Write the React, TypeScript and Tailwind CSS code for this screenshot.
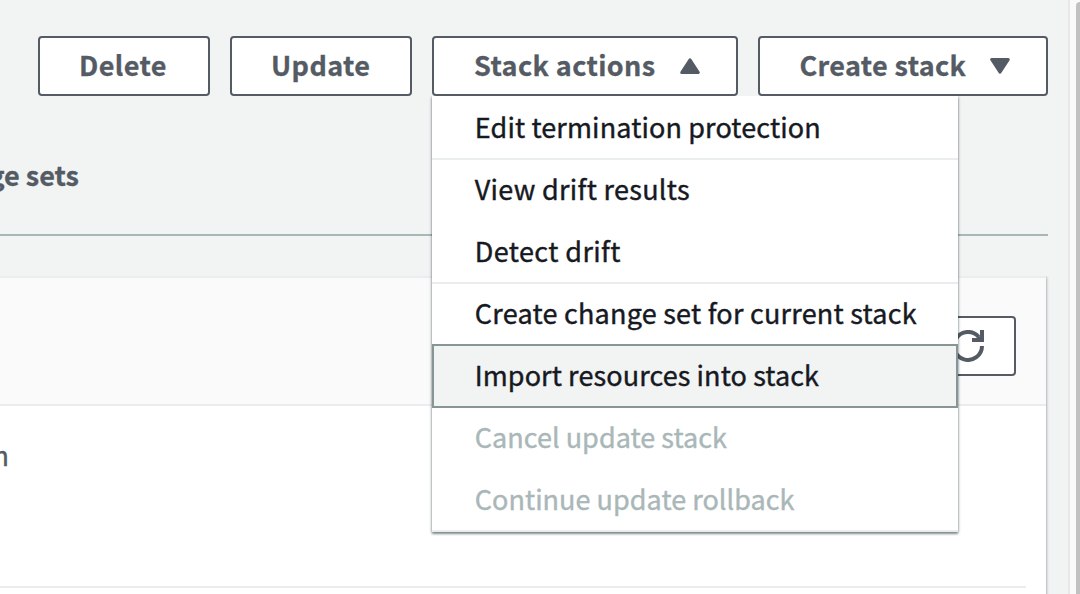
import type { ReactNode } from "react";

const items = [
  { label: "Edit termination protection", cls: "tracking-[0.12px] border-t-transparent" },
  { label: "View drift results", cls: "tracking-[0.3px] border-t-[#eaeded]" },
  { label: "Detect drift", cls: "tracking-[0.4px] border-t-transparent" },
  { label: "Create change set for current stack", cls: "tracking-[0.23px] border-t-[#eaeded]" },
  { label: "Import resources into stack", cls: "selected" },
  { label: "Cancel update stack", cls: "tracking-[0.03px] border-t-transparent text-[#aab7b8]" },
  { label: "Continue update rollback", cls: "tracking-[0.03px] border-t-transparent text-[#aab7b8]" },
];

function Button({ className, children }: { className: string; children: ReactNode }) {
  return (
    <button
      className={`flex h-[60px] shrink-0 rounded-[4px] border-2 border-[#545b64] bg-white text-left text-[27px] leading-[54px] font-bold whitespace-nowrap text-[#545b64] [-webkit-text-stroke:0.3px] ${className}`}
    >
      {children}
    </button>
  );
}

function Caret({ up = false }: { up?: boolean }) {
  return (
    <svg className="mt-[18px] ml-6 h-5 w-5" viewBox="0 0 20 20" fill="#545b64" stroke="#545b64" strokeWidth="3" strokeLinejoin="round">
      {up ? <path d="M10 3.8 18.3 16.5H1.7Z" /> : <path d="M1.7 3.5H18.3L10 16.2Z" />}
    </svg>
  );
}

export default function App() {
  return (
    <div className="flex h-[594px] w-[1080px] overflow-hidden bg-[#f2f3f3] font-['Noto_Sans_CJK_SC',sans-serif] text-[#16191f]">
      <main className="flex w-[1068px] shrink-0 flex-col">
        <header className="flex h-24 shrink-0 items-end gap-5 pl-[38px]">
          <Button className="w-[172px] pl-[39px] tracking-[0.4px]">Delete</Button>
          <Button className="w-[182px] pl-[39px] tracking-[0.4px]">Update</Button>
          <div className="relative">
            <Button className="w-[306px] pl-[40px] tracking-[0.4px]">
              Stack actions
              <Caret up />
            </Button>
            <ul className="absolute top-[60px] left-0 z-10 w-[526px] border-b-2 border-[#eaeded] bg-white text-[27px] leading-[58px] whitespace-nowrap shadow-[0_1px_3px_0_rgba(0,28,36,0.45),0_2px_2px_0_rgba(0,28,36,0.3)] [-webkit-text-stroke:0.4px] [clip-path:inset(0_-6px_-8px_-6px)]">
              {items.map((it) => (
                <li
                  key={it.label}
                  className={
                    it.cls === "selected"
                      ? "relative -mb-[2px] h-16 border-2 border-[#879596] bg-[#f2f3f3] pl-[40.7px] tracking-[0.1px]"
                      : `h-[62px] border-t-2 pl-[42.8px] ${it.cls}`
                  }
                >
                  {it.label}
                </li>
              ))}
            </ul>
          </div>
          <Button className="w-[290px] pl-[39.5px] tracking-[0.35px]">
            Create stack
            <Caret />
          </Button>
        </header>
        <nav className="mr-5 flex h-[140px] shrink-0 border-b-2 border-[#aab7b8]">
          <div className="mt-[57px] flex w-[79px] justify-end text-[27px] leading-[44px] font-bold whitespace-nowrap text-[#545b64] [-webkit-text-stroke:0.3px]">Change sets</div>
        </nav>
        <section className="mt-10 mr-[22px] h-[340px] shrink-0 border-t-2 border-[#eaeded] bg-white shadow-[0_1px_3px_0_rgba(0,28,36,0.5)] [clip-path:inset(0_-6px_0_0)]">
          <div className="flex h-32 items-center justify-end border-b-2 border-[#eaeded] bg-[#fafafa] pt-[10px] pr-[30px]">
            <button className="flex h-[60px] w-24 items-center justify-center rounded-[4px] border-2 border-[#545b64] bg-white">
              <svg className="h-8 w-8" viewBox="0 0 32 32" fill="none" stroke="#545b64" strokeWidth="4">
                <path d="M30 16a14 14 0 1 1-3.4-9.2" />
                <path d="M30 0v10H20" />
                <path d="M24.5 4 28.5 7V10H23L25 8Z" fill="#545b64" stroke="none" />
              </svg>
            </button>
          </div>
          <div className="mr-5 h-[182px] border-b-2 border-[#eaeded]">
            <div className="flex w-[9px] justify-end pt-[29px] text-[27px] leading-[40px] whitespace-nowrap text-[#545b64] [-webkit-text-stroke:0.4px]">Description</div>
          </div>
        </section>
      </main>
      <aside className="flex w-3 shrink-0 justify-end border-l-2 border-[#e8e8e8] bg-[#fafafa] pt-[2px]">
        <div className="w-1 rounded-tl-[5px] bg-[#c1c1c1]" />
      </aside>
    </div>
  );
}
